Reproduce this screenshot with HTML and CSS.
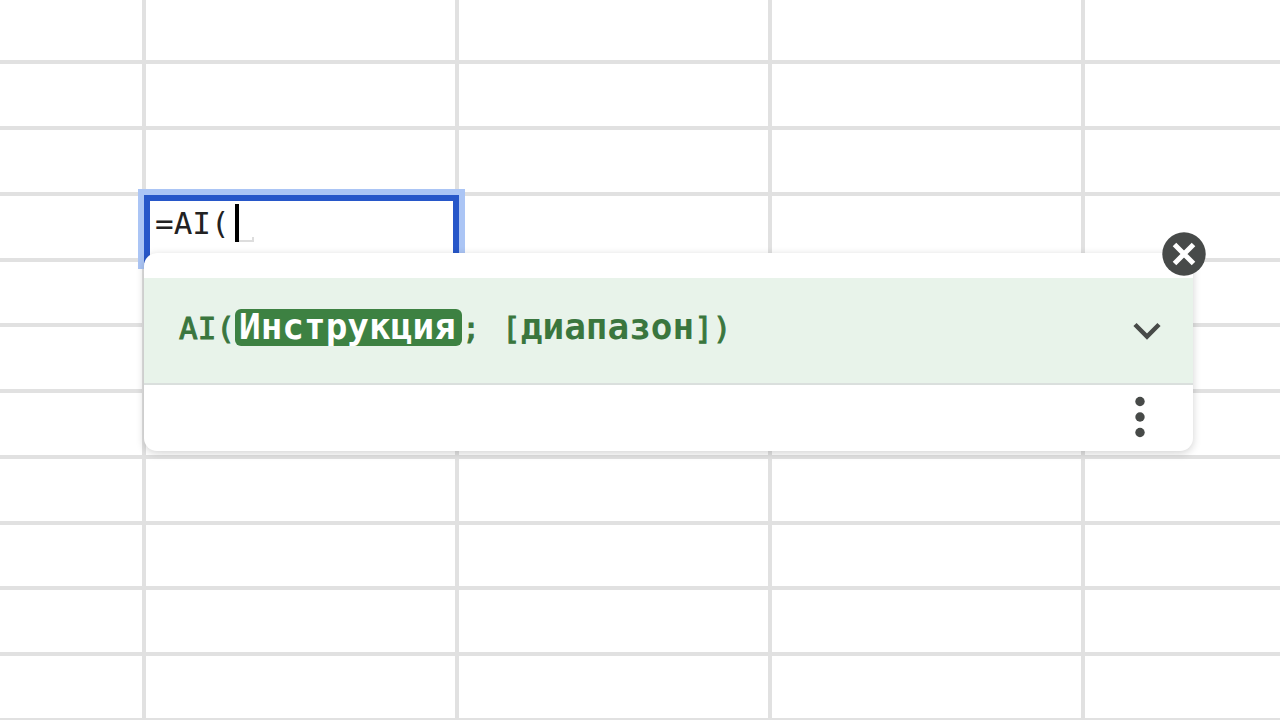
FILE: index.html
```html
<!DOCTYPE html>
<html lang="ru">
<head>
<meta charset="utf-8">
<title>Таблица</title>
<link rel="stylesheet" href="styles.css">
</head>
<body>
<main class="sheet">
  <table class="grid" aria-label="Таблица">
    <colgroup><col class="col-first"><col class="col"><col class="col"><col class="col"><col></colgroup>
    <tbody>
      <tr class="row-first"><td></td><td></td><td></td><td></td><td></td></tr>
      <tr><td></td><td></td><td></td><td></td><td></td></tr>
      <tr><td></td><td></td><td></td><td></td><td></td></tr>
      <tr><td></td><td></td><td></td><td></td><td></td></tr>
      <tr><td></td><td></td><td></td><td></td><td></td></tr>
      <tr><td></td><td></td><td></td><td></td><td></td></tr>
      <tr><td></td><td></td><td></td><td></td><td></td></tr>
      <tr><td></td><td></td><td></td><td></td><td></td></tr>
      <tr><td></td><td></td><td></td><td></td><td></td></tr>
      <tr><td></td><td></td><td></td><td></td><td></td></tr>
      <tr><td></td><td></td><td></td><td></td><td></td></tr>
    </tbody>
  </table>

  <div class="editor">
    <input class="formula" type="text" value="=AI(" aria-label="Формула" spellcheck="false">
    <span class="caret"></span>
    <span class="hint-corner"></span>
  </div>

  <section class="helper" aria-label="Справка по функции">
    <div class="signature">
      <code class="syntax">AI(<mark class="argument">Инструкция</mark>;<b> </b>[<b>диапазон</b>])</code>
      <button class="icon-button" type="button" aria-label="Развернуть">
        <svg width="28" height="18" viewBox="0 0 28 18"><path d="M2 2.5 14 14.500 26 2.500" fill="none" stroke="#474a48" stroke-width="4.500"/></svg>
      </button>
    </div>
    <div class="actions">
      <button class="icon-button" type="button" aria-label="Ещё">
        <svg width="10" height="42" viewBox="0 0 10 42" fill="#474a48"><circle cx="5" cy="5.500" r="4.700"/><circle cx="5" cy="21" r="4.700"/><circle cx="5" cy="36.500" r="4.700"/></svg>
      </button>
    </div>
    <button class="close" type="button" aria-label="Закрыть">
      <svg width="44" height="44" viewBox="0 0 44 44"><circle cx="22" cy="22" r="21.700" fill="#474a49"/><path d="M12.500 12.500 31.500 31.500M31.500 12.500 12.500 31.500" stroke="#fff" stroke-width="5"/></svg>
    </button>
  </section>
</main>
</body>
</html>
```

FILE: styles.css
```css
* {
  box-sizing: border-box;
}

body {
  margin: 0;
  background: #fff;
  font-family: "DejaVu Sans Mono", monospace;
}

.sheet {
  position: relative;
  height: 100vh;
  overflow: hidden;
}

.grid {
  width: 100%;
  table-layout: fixed;
  border-collapse: separate;
  border-spacing: 0;
}

.col-first {
  width: 146px;
}

.col {
  width: 313px;
}

.grid td {
  height: 66px;
  padding: 0;
  border-right: 4px solid #e1e1e1;
  border-bottom: 4px solid #e1e1e1;
}

.grid td:last-child {
  border-right: 0;
}

.grid tr:nth-child(4n + 5) td {
  height: 65px;
}

.grid .row-first td {
  height: 64px;
}

button {
  padding: 0;
  border: 0;
  background: none;
  cursor: pointer;
}

svg {
  display: block;
}

/* Cell being edited */
.editor {
  position: absolute;
  top: 195px;
  left: 144px;
  display: flex;
  width: 315px;
  height: 68px;
  padding: 3px 5px;
  border: 6px solid #2757c9;
  background: #fff;
  box-shadow: 0 0 0 6px #abc5f5;
}

.formula {
  width: 80px;
  height: 38px;
  padding: 0;
  border: 0;
  outline: 0;
  background: none;
  color: #222;
  font: 31px/38px "DejaVu Sans Mono", monospace;
}

.caret {
  width: 4px;
  height: 38px;
  background: #000;
}

.hint-corner {
  width: 15px;
  height: 5px;
  margin-top: 33px;
  border-right: 2px solid #ddd;
  border-bottom: 2px solid #ddd;
}

/* Function help popup */
.helper {
  position: absolute;
  top: 253px;
  left: 144px;
  right: 87px;
  padding-top: 25px;
  border-radius: 13px;
  background: #fff;
  box-shadow: 0 2px 8px rgba(0, 0, 0, 0.18);
}

.signature {
  display: flex;
  align-items: center;
  justify-content: space-between;
  height: 107px;
  padding: 0 32px 0 35px;
  border-bottom: 2px solid #dadfdd;
  background: #e8f3ea;
}

.syntax {
  padding-bottom: 6px;
  color: #3a763e;
  font: 31px/36px "DejaVu Sans Mono", monospace;
  white-space: pre;
  -webkit-text-stroke: 1px #3a763e;
}

.syntax b,
.argument {
  font-size: 36px;
  font-weight: bold;
  -webkit-text-stroke: 0;
}

.argument {
  display: inline-block;
  height: 37px;
  padding: 0 6px 0 4px;
  border-radius: 6px;
  background: #3d8142;
  color: #fff;
}

.actions {
  display: flex;
  align-items: center;
  justify-content: flex-end;
  height: 66px;
  padding: 0 48px 2px 0;
}

.close {
  position: absolute;
  top: -21px;
  right: -13px;
  border-radius: 50%;
}
```
